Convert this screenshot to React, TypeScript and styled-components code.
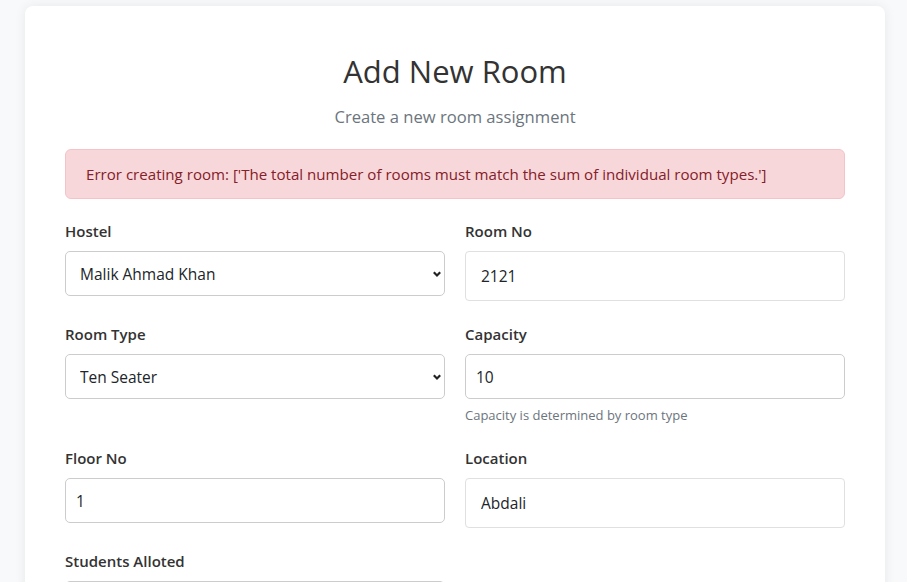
import React from "react";
import styled, { createGlobalStyle } from "styled-components";

const Global = createGlobalStyle`
  html, body { margin: 0; padding: 0; background: #f8f9fa; }
  body { font-family: "Open Sans", "Noto Sans", "Liberation Sans", sans-serif; color: #212529; }
  * { box-sizing: border-box; }
`;

const Page = styled.div`
  padding: 6px 22px 0 25px;
  min-height: 582px;
`;

const Card = styled.div`
  width: 860px;
  background: #fff;
  border-radius: 8px;
  box-shadow: 0 0 12px rgba(0, 0, 0, 0.07);
  padding: 46px 40px 40px;
`;

const Title = styled.h2`
  margin: 0;
  text-align: center;
  font-size: 31px;
  font-weight: 400;
  line-height: 38px;
  color: #333;
`;

const Subtitle = styled.p`
  margin: 14px 0 19px;
  text-align: center;
  font-size: 16.6px;
  line-height: 26px;
  color: #6c757d;
`;

const Alert = styled.div`
  background: #f8d7da;
  border: 1px solid #f5c2c7;
  color: #842029;
  border-radius: 6px;
  padding: 12px 20px;
  font-size: 15.1px;
  line-height: 24px;
  margin-bottom: 21px;
`;

const Grid = styled.div`
  display: grid;
  grid-template-columns: 1fr 1fr;
  column-gap: 20px;
  row-gap: 22px;
  align-items: start;
`;

const Group = styled.div`
  display: flex;
  flex-direction: column;
`;

const Label = styled.label`
  font-size: 15px;
  font-weight: 600;
  line-height: 22px;
  color: #333;
  margin-bottom: 9px;
`;

const SelectWrap = styled.div`
  position: relative;
`;

const Select = styled.select`
  width: 100%;
  height: 45px;
  appearance: none;
  border: 1px solid #ccc;
  border-radius: 5px;
  background: #fff;
  padding: 0 30px 0 14px;
  font-family: inherit;
  font-size: 15.5px;
  color: #212529;
`;

const Chevron = styled.svg`
  position: absolute;
  right: 3px;
  top: 50%;
  width: 10px;
  height: 10px;
  margin-top: -5px;
  pointer-events: none;
`;

const Input = styled.input<{ $soft?: boolean }>`
  width: 100%;
  height: ${(p) => (p.$soft ? "50px" : "45px")};
  border: 1px solid ${(p) => (p.$soft ? "#e0e0e0" : "#ccc")};
  border-radius: ${(p) => (p.$soft ? "4px" : "5px")};
  background: #fff;
  padding: 0 ${(p) => (p.$soft ? "15px" : "10px")};
  font-family: inherit;
  font-size: 15.5px;
  color: #212529;
  outline: none;
`;

const Help = styled.div`
  margin-top: 6px;
  font-size: 13px;
  line-height: 20px;
  color: #6c757d;
`;

const ChevronIcon = () => (
  <Chevron viewBox="0 0 10 10">
    <path d="M1.8 3.3 L5 6.5 L8.2 3.3" fill="none" stroke="#222" strokeWidth="2.2" />
  </Chevron>
);

export default function App() {
  return (
    <>
      <Global />
      <Page>
        <Card>
          <Title>Add New Room</Title>
          <Subtitle>Create a new room assignment</Subtitle>
          <Alert>
            Error creating room: ['The total number of rooms must match the sum of individual room types.']
          </Alert>
          <Grid>
            <Group>
              <Label>Hostel</Label>
              <SelectWrap>
                <Select defaultValue="mak">
                  <option value="mak">Malik Ahmad Khan</option>
                </Select>
                <ChevronIcon />
              </SelectWrap>
            </Group>
            <Group>
              <Label>Room No</Label>
              <Input $soft defaultValue="2121" />
            </Group>
            <Group>
              <Label>Room Type</Label>
              <SelectWrap>
                <Select defaultValue="ten">
                  <option value="ten">Ten Seater</option>
                </Select>
                <ChevronIcon />
              </SelectWrap>
            </Group>
            <Group>
              <Label>Capacity</Label>
              <Input defaultValue="10" readOnly />
              <Help>Capacity is determined by room type</Help>
            </Group>
            <Group>
              <Label>Floor No</Label>
              <Input defaultValue="1" />
            </Group>
            <Group>
              <Label>Location</Label>
              <Input $soft defaultValue="Abdali" />
            </Group>
            <Group>
              <Label>Students Alloted</Label>
              <Input defaultValue="0" />
            </Group>
          </Grid>
        </Card>
      </Page>
    </>
  );
}
